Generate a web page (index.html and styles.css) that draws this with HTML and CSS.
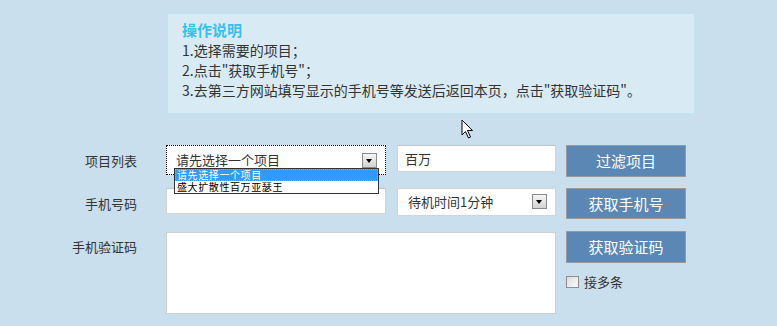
FILE: index.html
```html
<!DOCTYPE html>
<html lang="zh-CN">
<head>
<meta charset="utf-8">
<title>操作说明</title>
<link rel="stylesheet" href="styles.css">
</head>
<body>
<div class="page">
  <div class="info">
    <div class="info-title">操作说明</div>
    <div class="info-line">1.选择需要的项目；</div>
    <div class="info-line">2.点击"获取手机号"；</div>
    <div class="info-line">3.去第三方网站填写显示的手机号等发送后返回本页，点击"获取验证码"。</div>
  </div>

  <div class="form">
    <div class="label">项目列表</div>
    <div class="cell">
      <div class="select select-project">
        <span class="select-text">请先选择一个项目</span>
        <span class="arrow"></span>
        <ul class="dropdown">
          <li class="active">请先选择一个项目</li>
          <li>盛大扩散性百万亚瑟王</li>
        </ul>
      </div>
    </div>
    <div class="cell"><div class="input input-filter">百万</div></div>
    <div class="cell"><div class="btn">过滤项目</div></div>

    <div class="label">手机号码</div>
    <div class="cell"><div class="input input-phone"></div></div>
    <div class="cell">
      <div class="select select-wait">
        <span class="select-text">待机时间1分钟</span>
        <span class="arrow"></span>
      </div>
    </div>
    <div class="cell"><div class="btn btn-phone">获取手机号</div></div>

    <div class="label">手机验证码</div>
    <div class="cell span2"><div class="textarea"></div></div>
    <div class="cell">
      <div class="btn btn-code">获取验证码</div>
      <label class="check"><span class="box"></span><span>接多条</span></label>
    </div>
  </div>
</div>
<svg class="cursor" width="14" height="21" viewBox="0 0 14 21">
  <path d="M1 1 L1 16 L4.5 12.5 L7.5 19 L9.5 18 L6.5 11.5 L11.5 11.5 Z" fill="#fff" stroke="#000" stroke-width="1" stroke-linejoin="miter"/>
</svg>
</body>
</html>
```

FILE: styles.css
```css
html, body {
  margin: 0;
  padding: 0;
}
body {
  background: #c9dfee;
  font-family: "Noto Sans CJK SC", "Noto Sans", sans-serif;
  color: #333;
  width: 777px;
  height: 326px;
  overflow: hidden;
  position: relative;
}
.page {
  padding-top: 12px;
}
.info {
  margin-left: 166px;
  border: 2px solid #c2e2ee;
  background: #d8ebf5;
  padding: 5px 0 0 14px;
  box-sizing: border-box;
  height: 103px;
  width: 530px;
}
.info-title {
  color: #38c0ec;
  font-size: 15px;
  font-weight: bold;
  line-height: 21px;
}
.info-line {
  font-size: 14px;
  line-height: 20px;
  color: #333;
}
.form {
  margin-top: 30px;
  display: grid;
  grid-template-columns: 166px 231px 169px 120px;
  grid-template-rows: 43px 43px auto;
}
.label {
  font-size: 13px;
  line-height: 31px;
  text-align: right;
  padding-right: 29px;
}
.cell {
  position: relative;
}
.span2 {
  grid-column: span 2;
}
.select {
  position: relative;
  background: #fff;
  box-sizing: border-box;
  font-size: 13px;
}
.select-project {
  width: 220px;
  height: 30px;
  border: 1px dotted #000;
  line-height: 28px;
  padding-left: 9px;
}
.select-wait {
  width: 159px;
  height: 28px;
  border: 1px solid #d3d3d3;
  line-height: 26px;
  padding-left: 10px;
}
.arrow {
  position: absolute;
  width: 15px;
  height: 15px;
  box-sizing: border-box;
  border: 1px solid #8a8a8a;
  background: linear-gradient(#f6f6f6, #d2d2d2);
}
.arrow::after {
  content: "";
  position: absolute;
  left: 3px;
  top: 5px;
  border-left: 3.5px solid transparent;
  border-right: 3.5px solid transparent;
  border-top: 4px solid #000;
}
.select-project .arrow {
  right: 8px;
  top: 7px;
}
.select-wait .arrow {
  right: 8px;
  top: 5px;
}
.dropdown {
  position: absolute;
  left: 7px;
  top: 22px;
  width: 205px;
  margin: 0;
  padding: 0;
  list-style: none;
  border: 1px solid #333;
  background: #fff;
  font-size: 10px;
  line-height: 12px;
  z-index: 2;
  box-sizing: border-box;
}
.dropdown li {
  height: 12px;
  padding-left: 2px;
  color: #000;
  white-space: nowrap;
  letter-spacing: 0.6px;
}
.dropdown li.active {
  background: #3399ff;
  color: #fff;
  outline: 1px dotted #e8a040;
  outline-offset: -1px;
}
.input {
  background: #fff;
  box-sizing: border-box;
  border: 1px solid #d3d3d3;
  border-top-color: #c4c4c4;
  font-size: 13px;
  line-height: 25px;
  padding-left: 7px;
}
.input-filter {
  width: 159px;
  height: 27px;
}
.input-phone {
  width: 220px;
  height: 26px;
}
.textarea {
  width: 390px;
  height: 82px;
  margin-top: 1px;
  background: #fff;
  box-sizing: border-box;
  border: 1px solid #cfcfcf;
}
.btn {
  width: 120px;
  height: 32px;
  box-sizing: border-box;
  border: 1px solid #9a9a9a;
  background: #5b87b5;
  color: #fff;
  font-size: 15px;
  line-height: 30px;
  text-align: center;
}
.btn-phone {
  height: 31px;
}
.check {
  display: flex;
  align-items: center;
  gap: 5px;
  margin-top: 12px;
  font-size: 13px;
  line-height: 14px;
}
.box {
  width: 13px;
  height: 12px;
  box-sizing: border-box;
  border: 1px solid #8d8d8d;
  background: linear-gradient(135deg, #dcdcdc, #fafafa);
}
.cursor {
  position: absolute;
  left: 461px;
  top: 119px;
}
```
